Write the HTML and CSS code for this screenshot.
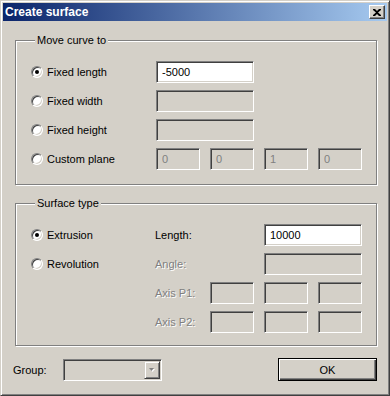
FILE: index.html
```html
<!DOCTYPE html>
<html lang="en">
<head>
    <meta charset="UTF-8">
    <title>Create surface</title>
    <link rel="stylesheet" href="styles.css">
</head>
<body>
    <div class="window">
        <div class="titlebar">
            <span class="title">Create surface</span>
            <button class="close-btn" type="button">
                <svg width="8" height="7" viewBox="0 0 8 7">
                    <path d="M0 0h2l2 2 2-2h2v1L5 3.5 8 6v1H6L4 5 2 7H0V6l3-2.5L0 1z" fill="#000"/>
                </svg>
            </button>
        </div>

        <div class="content">
            <div class="group group-move">
                <div class="group-title">Move curve to</div>
                <div class="group-grid">
                    <label class="option"><span class="radio checked"></span>Fixed length</label>
                    <input class="field wide" value="-5000">

                    <label class="option"><span class="radio"></span>Fixed width</label>
                    <input class="field wide" disabled>

                    <label class="option"><span class="radio"></span>Fixed height</label>
                    <input class="field wide" disabled>

                    <label class="option"><span class="radio"></span>Custom plane</label>
                    <input class="field" value="0" disabled>
                    <input class="field" value="0" disabled>
                    <input class="field" value="1" disabled>
                    <input class="field" value="0" disabled>
                </div>
            </div>

            <div class="group group-surface">
                <div class="group-title">Surface type</div>
                <div class="group-grid">
                    <label class="option"><span class="radio checked"></span>Extrusion</label>
                    <span class="param">Length:</span>
                    <input class="field wide at-right" value="10000">

                    <label class="option"><span class="radio"></span>Revolution</label>
                    <span class="param disabled">Angle:</span>
                    <input class="field wide at-right" disabled>

                    <span class="param disabled">Axis P1:</span>
                    <input class="field" disabled>
                    <input class="field" disabled>
                    <input class="field" disabled>

                    <span class="param disabled">Axis P2:</span>
                    <input class="field" disabled>
                    <input class="field" disabled>
                    <input class="field" disabled>
                </div>
            </div>

            <div class="footer">
                <span class="footer-label">Group:</span>
                <div class="combo">
                    <span class="combo-btn">
                        <svg width="6" height="4" viewBox="0 0 6 4">
                            <path d="M1 1h5l-2.5 3z" fill="#fff"/>
                            <path d="M0 0h5L2.5 3z" fill="#808080"/>
                        </svg>
                    </span>
                </div>
                <button class="ok-btn" type="button">OK</button>
            </div>
        </div>
    </div>
</body>
</html>
```

FILE: styles.css
```css
body {
    margin: 0;
    padding: 0;
    font-family: 'Liberation Sans', Arial, sans-serif;
    font-size: 11px;
    color: #000;
    background: #d4d0c8;
}

.window {
    box-sizing: border-box;
    width: 390px;
    height: 396px;
    padding: 2px;
    background: #d4d0c8;
    border: 1px solid;
    border-color: #d4d0c8 #404040 #404040 #d4d0c8;
    box-shadow: inset 1px 1px 0 #fff, inset -1px -1px 0 #808080;
}

/* title bar */

.titlebar {
    height: 18px;
    display: flex;
    align-items: center;
    justify-content: space-between;
    padding: 0 2px;
    background: linear-gradient(to right, #0a246a, #a6caf0);
}

.title {
    color: #fff;
    font-weight: bold;
    font-size: 12px;
    line-height: 14px;
}

.close-btn {
    box-sizing: border-box;
    width: 16px;
    height: 14px;
    padding: 0;
    margin: 0;
    display: flex;
    align-items: center;
    justify-content: center;
    background: #d4d0c8;
    border: 1px solid;
    border-color: #fff #404040 #404040 #fff;
    box-shadow: inset -1px -1px 0 #808080;
}

/* group boxes */

.content {
    padding-left: 12px;
}

.group {
    box-sizing: border-box;
    width: 362px;
    border: 1px solid #808080;
    box-shadow: inset 1px 1px 0 #fff, 1px 1px 0 #fff;
    padding: 0 15px;
}

.group-move {
    height: 145px;
    margin-top: 19px;
}

.group-surface {
    height: 143px;
    margin-top: 18px;
}

.group-title {
    display: table;
    margin: -7px 0 0 4px;
    padding: 0 2px;
    line-height: 13px;
    background: #d4d0c8;
}

.group-grid {
    margin-top: 14px;
    display: grid;
    grid-template-columns: 115px repeat(4, 44px);
    grid-auto-rows: 22px;
    column-gap: 10px;
    row-gap: 7px;
}

.option {
    grid-column: 1;
    display: flex;
    align-items: center;
    gap: 4px;
}

.radio {
    box-sizing: border-box;
    width: 12px;
    height: 12px;
    border-radius: 50%;
    background: #fff;
    border: 1px solid;
    border-color: #808080 #fff #fff #808080;
    box-shadow: inset 1px 1px 0 #404040, inset -1px -1px 0 #d4d0c8;
    display: flex;
    align-items: center;
    justify-content: center;
}

.radio.checked::after {
    content: '';
    width: 4px;
    height: 4px;
    border-radius: 50%;
    background: #000;
}

.param {
    grid-column: 2;
    display: flex;
    align-items: center;
    margin-left: -1px;
    white-space: nowrap;
}

.param.disabled {
    color: #808080;
    text-shadow: 1px 1px 0 #fff;
}

.field {
    box-sizing: border-box;
    width: 100%;
    height: 22px;
    margin: 0;
    padding: 0 0 0 5px;
    font-family: inherit;
    font-size: 11px;
    color: #000;
    background: #fff;
    border: 1px solid;
    border-color: #808080 #fff #fff #808080;
    box-shadow: inset 1px 1px 0 #404040, inset -1px -1px 0 #d4d0c8;
    outline: none;
}

.field:disabled {
    background: #d4d0c8;
    color: #808080;
    -webkit-text-fill-color: #808080;
}

.field.wide {
    grid-column: 2 / span 2;
}

.field.at-right {
    grid-column: 4 / span 2;
}

/* footer */

.footer {
    width: 364px;
    height: 23px;
    margin: 12px 0 0 -2px;
    display: flex;
    align-items: center;
}

.footer-label {
    width: 50px;
}

.combo {
    box-sizing: border-box;
    width: 99px;
    height: 22px;
    padding: 1px;
    display: flex;
    justify-content: flex-end;
    background: #d4d0c8;
    border: 1px solid;
    border-color: #808080 #fff #fff #808080;
    box-shadow: inset 1px 1px 0 #404040, inset -1px -1px 0 #d4d0c8;
}

.combo-btn {
    box-sizing: border-box;
    width: 16px;
    height: 18px;
    display: flex;
    align-items: center;
    justify-content: center;
    border: 1px solid;
    border-color: #d4d0c8 #404040 #404040 #d4d0c8;
    box-shadow: inset 1px 1px 0 #fff, inset -1px -1px 0 #808080;
}

.ok-btn {
    box-sizing: border-box;
    width: 99px;
    height: 23px;
    margin: 0 0 0 auto;
    padding: 0;
    font-family: inherit;
    font-size: 11px;
    color: #000;
    background: #d4d0c8;
    border: 1px solid #000;
    box-shadow: inset 1px 1px 0 #fff, inset -1px -1px 0 #404040, inset -2px -2px 0 #808080;
}
```
